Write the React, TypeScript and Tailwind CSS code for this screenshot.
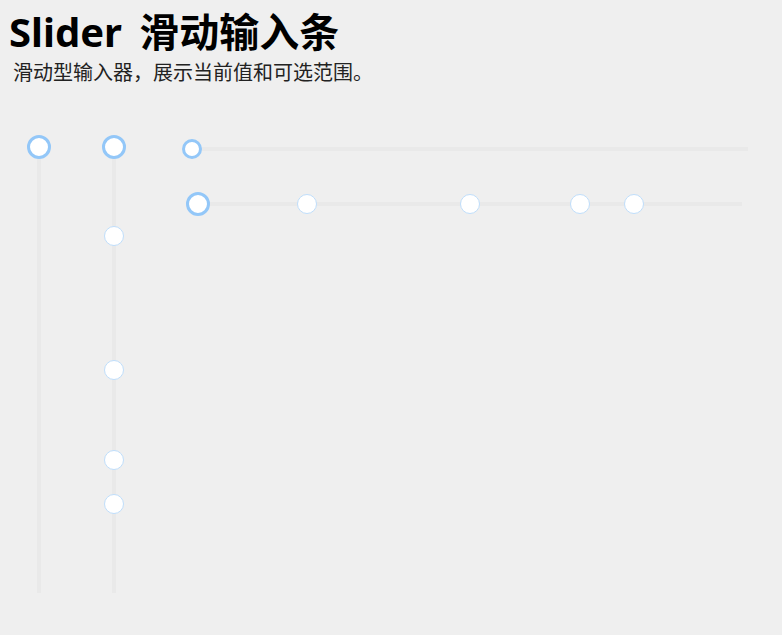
import React from "react";

type Mark = { at: number; strong?: boolean; small?: boolean };

const Handle: React.FC<{ mark: Mark; vertical?: boolean }> = ({ mark, vertical }) => {
  const size = mark.strong ? (mark.small ? "w-5 h-5 border-[3px]" : "w-6 h-6 border-[3px]") : "w-5 h-5 border-[1.5px]";
  const color = mark.strong ? "border-[#93c7f8]" : "border-[#bfdefb]";
  const pos = vertical ? { top: mark.at } : { left: mark.at };
  return (
    <span
      className={`absolute block rounded-full bg-white ${size} ${color} -translate-x-1/2 -translate-y-1/2 ${vertical ? "left-1/2" : "top-1/2"}`}
      style={pos}
    />
  );
};

const VerticalSlider: React.FC<{ marks: Mark[] }> = ({ marks }) => (
  <div className="relative w-6 h-[446px] shrink-0">
    <div className="mx-auto w-1 h-full bg-[#e9e9e9]" />
    {marks.map((m, i) => (
      <Handle key={i} mark={m} vertical />
    ))}
  </div>
);

const HorizontalSlider: React.FC<{ marks: Mark[]; className: string }> = ({ marks, className }) => (
  <div className={`relative h-1 bg-[#e9e9e9] ${className}`}>
    {marks.map((m, i) => (
      <Handle key={i} mark={m} />
    ))}
  </div>
);

const App: React.FC = () => {
  return (
    <div
      className="min-h-[635px] w-full bg-[#efefef] text-black"
      style={{ fontFamily: '"Noto Sans", "Noto Sans CJK SC", sans-serif' }}
    >
      <div className="px-[9px] pt-[8px]">
        <h1 className="text-[40px] font-bold leading-[48px] [word-spacing:7px]">Slider 滑动输入条</h1>
        <p className="ml-[4px] mt-[4px] text-[20px] leading-[26px] text-[#222]">
          滑动型输入器，展示当前值和可选范围。
        </p>
      </div>

      <div className="flex items-start pl-[27px] mt-[61px]">
        <VerticalSlider marks={[{ at: 0, strong: true }]} />
        <div className="ml-[51px]">
          <VerticalSlider
            marks={[
              { at: 0, strong: true },
              { at: 89 },
              { at: 223 },
              { at: 313 },
              { at: 357 },
            ]}
          />
        </div>
        <div className="flex flex-col">
          <HorizontalSlider className="ml-[66px] w-[556px]" marks={[{ at: 0, strong: true, small: true }]} />
          <HorizontalSlider
            className="ml-[72px] mt-[51px] w-[544px]"
            marks={[
              { at: 0, strong: true },
              { at: 109 },
              { at: 272 },
              { at: 382 },
              { at: 436 },
            ]}
          />
        </div>
      </div>
    </div>
  );
};

export default App;
